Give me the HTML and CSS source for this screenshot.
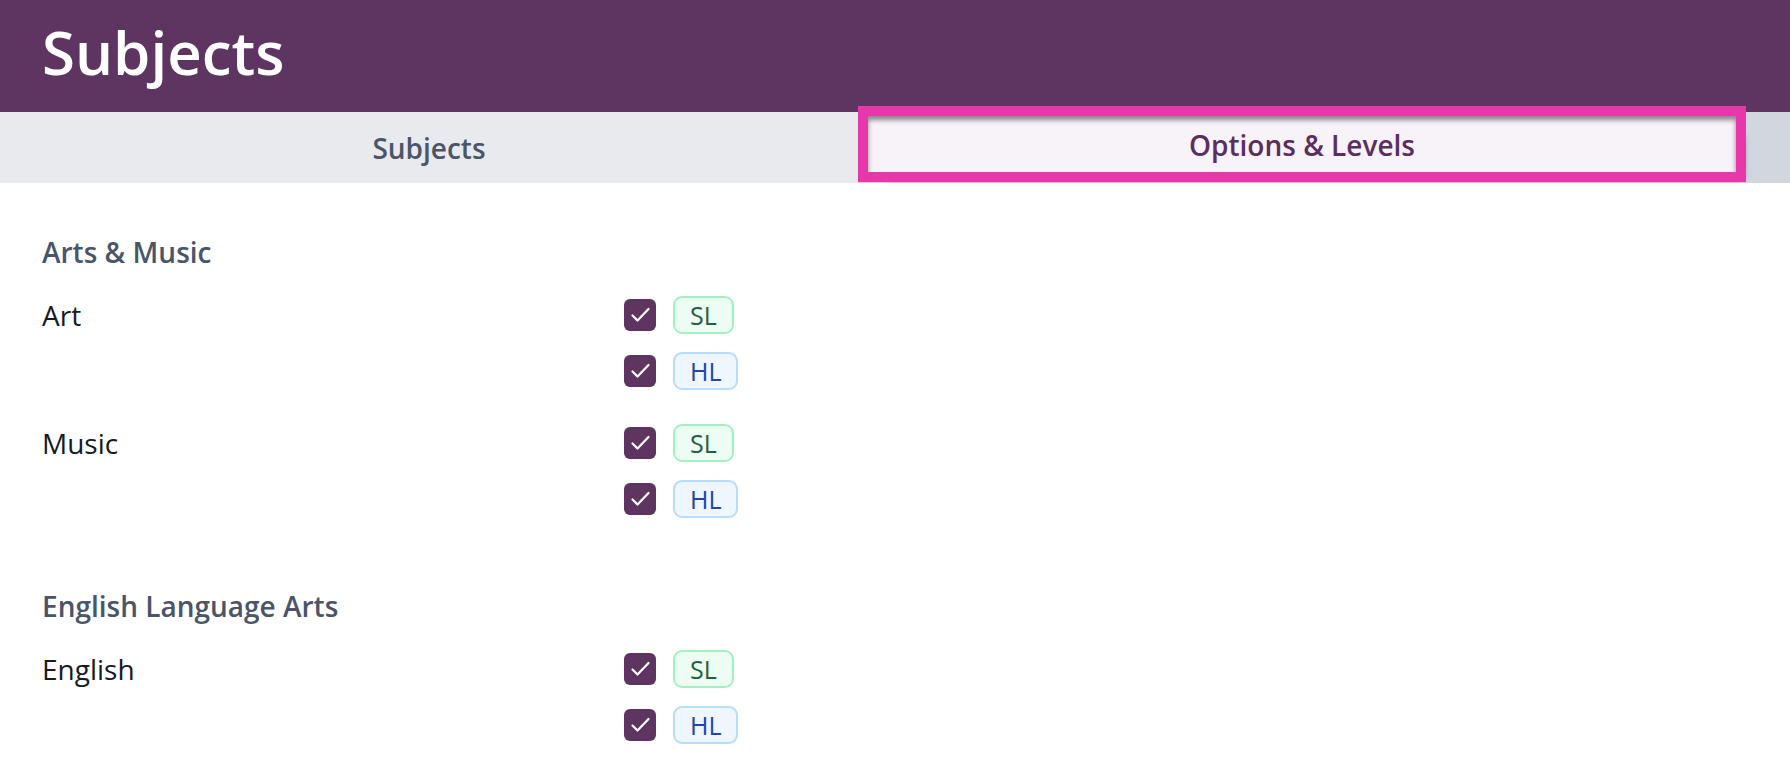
FILE: index.html
```html
<!DOCTYPE html>
<html lang="en">
<head>
    <meta charset="UTF-8">
    <meta name="viewport" content="width=device-width, initial-scale=1.0">
    <title>Subjects</title>
    <link rel="stylesheet" href="styles.css">
</head>
<body>
    <header class="page-header">
        <h1>Subjects</h1>
    </header>

    <nav class="tabs">
        <button class="tab">Subjects</button>
        <button class="tab tab-selected">Options &amp; Levels</button>
    </nav>

    <main class="content">
        <section class="group">
            <h2>Arts &amp; Music</h2>
            <div class="subject-list">
                <div class="subject">
                    <span class="subject-name">Art</span>
                    <div class="options">
                        <label class="option">
                            <span class="check"><svg viewBox="0 0 32 32"><polyline points="8.5,16.5 13.5,21.5 24.5,10"/></svg></span>
                            <span class="badge badge-sl">SL</span>
                        </label>
                        <label class="option">
                            <span class="check"><svg viewBox="0 0 32 32"><polyline points="8.5,16.5 13.5,21.5 24.5,10"/></svg></span>
                            <span class="badge badge-hl">HL</span>
                        </label>
                    </div>
                </div>
                <div class="subject">
                    <span class="subject-name">Music</span>
                    <div class="options">
                        <label class="option">
                            <span class="check"><svg viewBox="0 0 32 32"><polyline points="8.5,16.5 13.5,21.5 24.5,10"/></svg></span>
                            <span class="badge badge-sl">SL</span>
                        </label>
                        <label class="option">
                            <span class="check"><svg viewBox="0 0 32 32"><polyline points="8.5,16.5 13.5,21.5 24.5,10"/></svg></span>
                            <span class="badge badge-hl">HL</span>
                        </label>
                    </div>
                </div>
            </div>
        </section>

        <section class="group">
            <h2>English Language Arts</h2>
            <div class="subject-list">
                <div class="subject">
                    <span class="subject-name">English</span>
                    <div class="options">
                        <label class="option">
                            <span class="check"><svg viewBox="0 0 32 32"><polyline points="8.5,16.5 13.5,21.5 24.5,10"/></svg></span>
                            <span class="badge badge-sl">SL</span>
                        </label>
                        <label class="option">
                            <span class="check"><svg viewBox="0 0 32 32"><polyline points="8.5,16.5 13.5,21.5 24.5,10"/></svg></span>
                            <span class="badge badge-hl">HL</span>
                        </label>
                    </div>
                </div>
            </div>
        </section>
    </main>
</body>
</html>
```

FILE: styles.css
```css
/* Common styles */
body {
    font-family: 'Open Sans', 'Noto Sans', sans-serif;
    margin: 0;
    padding: 0;
    background-color: #fff;
    color: #1a202c;
    overflow: hidden;
}

.page-header {
    height: 112px;
    box-sizing: border-box;
    background-color: #5d3560;
    display: flex;
    align-items: center;
    padding: 0 42px 8px;
}

.page-header h1 {
    margin: 0;
    color: #fff;
    font-size: 60px;
    font-weight: 600;
    line-height: 1.2;
}

/* Tab strip */
.tabs {
    display: grid;
    grid-template-columns: 858px 888px 1fr;
    height: 71px;
    background-color: #d2d6de;
}

.tab {
    border: none;
    background-color: #e9eaee;
    font-family: inherit;
    font-size: 28px;
    font-weight: 600;
    color: #4a5568;
    cursor: pointer;
    padding: 0;
}

.tab-selected {
    margin: 4px 10px 11px;
    background-color: #f8f3f8;
    color: #5b2d60;
    padding-top: 2px;
    outline: 10px solid #e638aa;
    box-shadow: inset 0 4px 5px rgba(0, 0, 0, 0.45), 13px 13px 6px -6px rgba(0, 0, 0, 0.6);
    position: relative;
}

/* Option list */
.content {
    padding: 49px 42px;
    display: flex;
    flex-direction: column;
    gap: 68px;
}

.group h2 {
    margin: 0 0 24px;
    font-size: 28px;
    font-weight: 600;
    line-height: 40px;
    color: #4a5568;
}

.subject-list {
    display: flex;
    flex-direction: column;
    gap: 34px;
}

.subject {
    display: grid;
    grid-template-columns: 582px auto;
    align-items: start;
}

.subject-name {
    font-size: 28px;
    line-height: 38px;
    color: #171923;
}

.options {
    display: flex;
    flex-direction: column;
    gap: 18px;
}

.option {
    display: flex;
    align-items: center;
    gap: 17px;
}

.check {
    width: 32px;
    height: 32px;
    border-radius: 6px;
    background-color: #5d3560;
    display: flex;
}

.check svg {
    width: 32px;
    height: 32px;
    fill: none;
    stroke: #fff;
    stroke-width: 2.2;
    stroke-linecap: round;
    stroke-linejoin: round;
}

.badge {
    height: 38px;
    box-sizing: border-box;
    padding: 0 15px;
    border: 2px solid;
    border-radius: 9px;
    font-size: 25px;
    line-height: 34px;
}

.badge-sl {
    background-color: #eefdf3;
    border-color: #a3f0c2;
    color: #1d6140;
}

.badge-hl {
    background-color: #eef6fe;
    border-color: #b8dcfb;
    color: #2445aa;
}
```
